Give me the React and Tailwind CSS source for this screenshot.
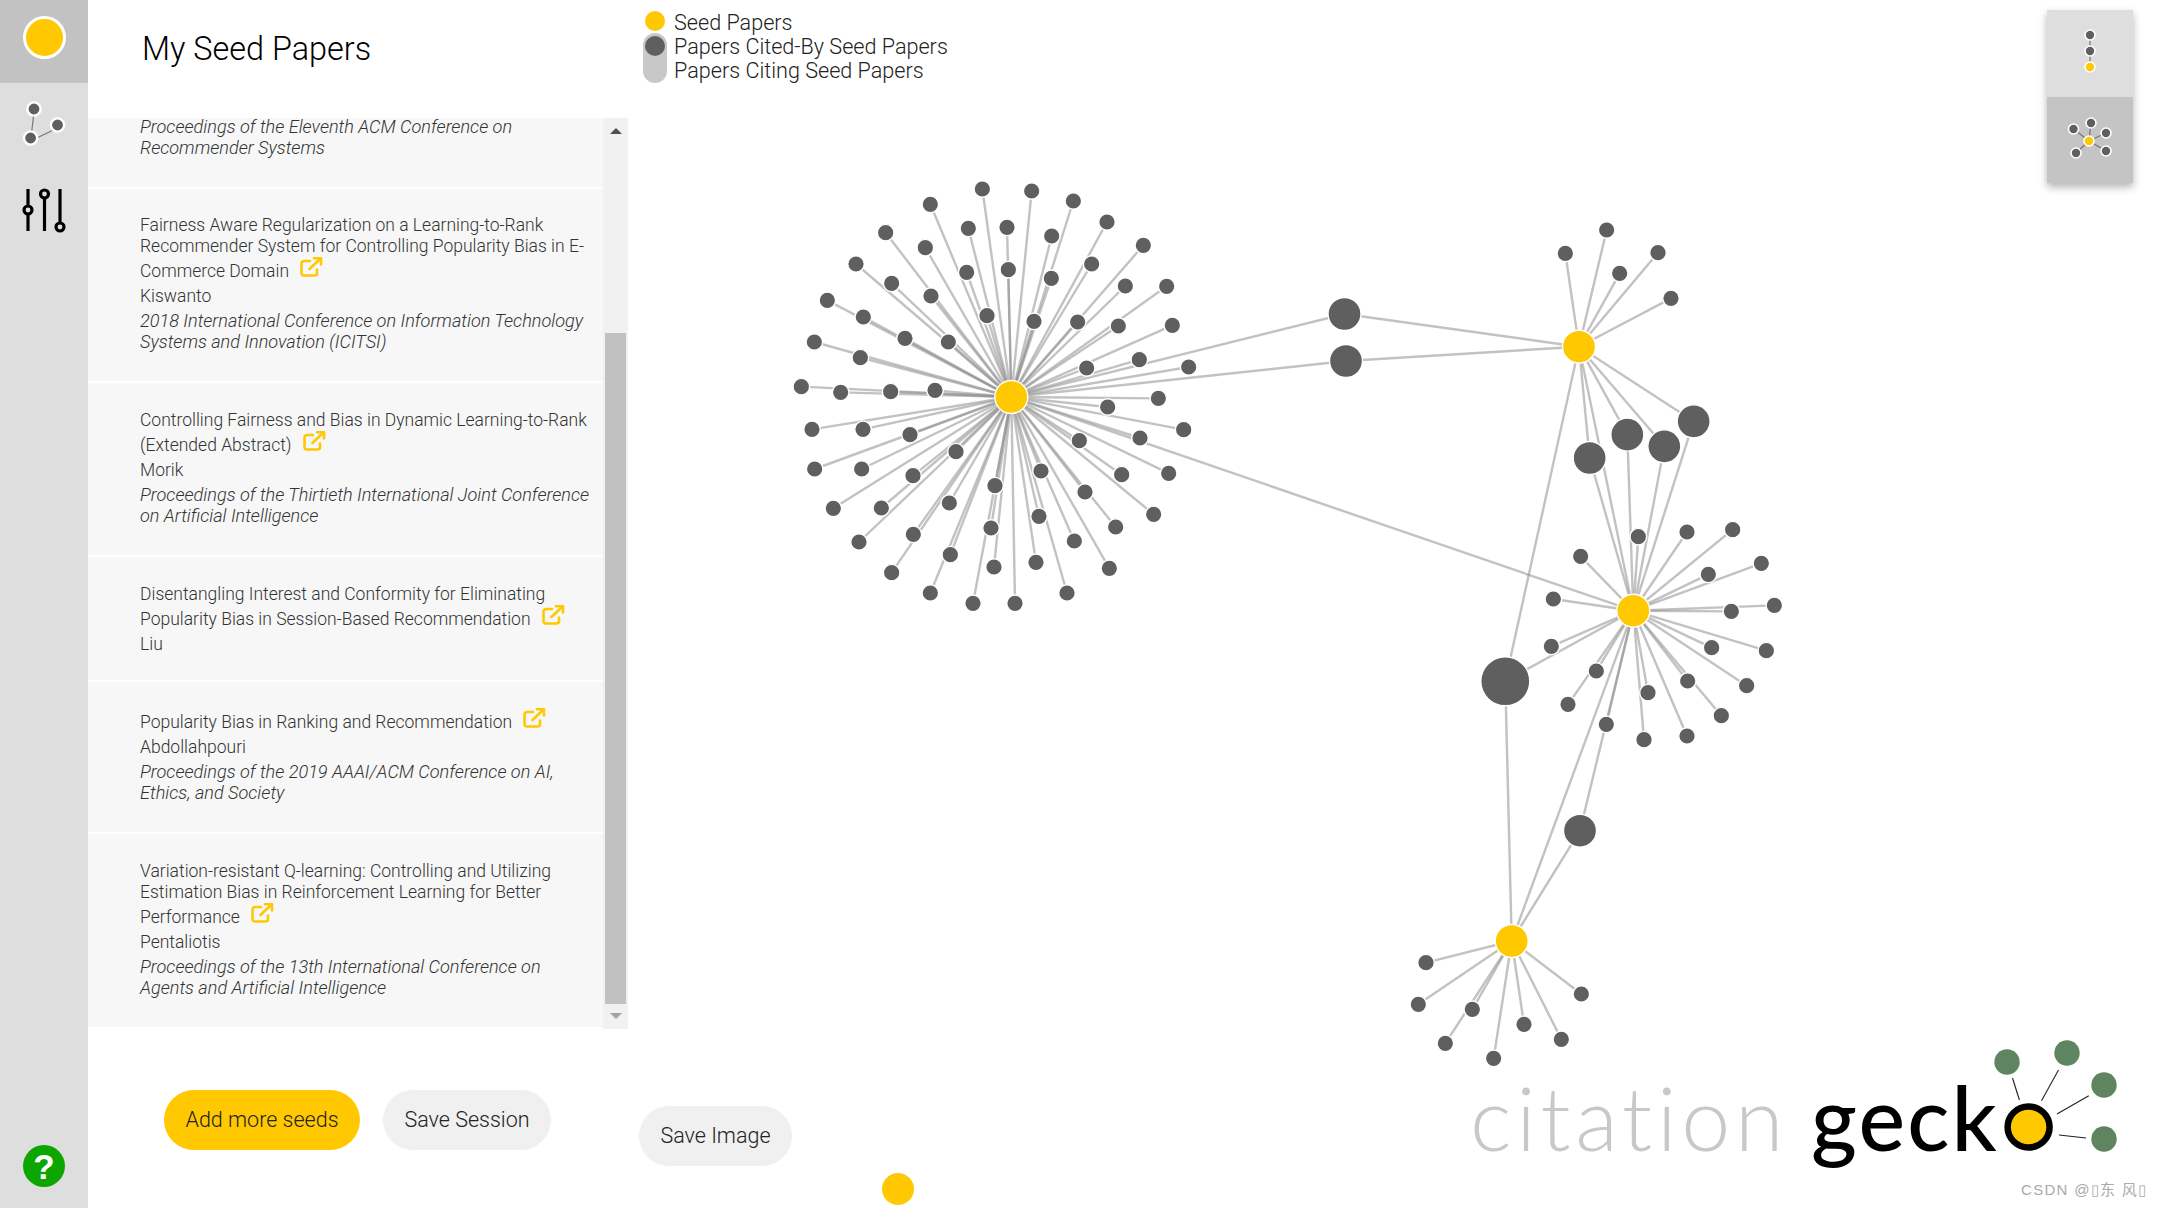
import React from "react";

const Z1 = [[607,87],[755,93],[880,123],[981,186],[1090,256],[1160,379],[1177,496],[1226,621],[1135,715],[1211,809],[1166,940],[1121,1063],[1007,1101],[988,1225],[861,1299],[705,1330],[579,1330],[451,1299],[335,1238],[237,1146],[160,1045],[104,927],[96,808],[64,680],[103,546],[142,421],[228,312],[317,218],[451,133],[565,205],[681,202],[815,228],[935,312],[1036,378],[1015,498],[1078,599],[920,624],[983,741],[1080,834],[1025,944],[915,996],[898,842],[883,1143],[783,933],[777,1069],[768,1207],[645,977],[633,1104],[642,1221],[511,1184],[508,1029],[400,1123],[528,875],[399,947],[304,1044],[245,927],[249,808],[390,824],[465,691],[332,695],[182,697],[241,593],[375,535],[250,471],[335,370],[505,546],[453,408],[436,263],[560,337],[621,467],[685,329],[762,484],[814,355],[893,486]];
const Z2 = [[560,90],[436,160],[714,158],[599,220],[753,295]];
const Z3 = [[565,110],[711,96],[848,89],[392,169],[775,223],[934,190],[973,316],[844,334],[310,297],[304,439],[785,443],[949,452],[890,557],[713,543],[814,647],[439,513],[354,613],[594,578],[711,708],[582,719],[469,673]];
const Z4 = [[108,488],[85,613],[247,628],[166,730],[311,775],[402,673],[514,718],[574,582]];

const map = (pts, ox, oy) => pts.map(([x, y]) => [ox + x / 3, oy + y / 3]);
const C1 = [1011.3, 397];
const C2 = [1579, 346.7];
const C3 = [1633.3, 610.7];
const C4 = [1511.7, 941];
const N1 = map(Z1, 780, 160);
const N2 = map(Z2, 1420, 200);
const N3 = map(Z3, 1450, 500);
const N4 = map(Z4, 1390, 800);
const B1 = [1344.5, 314];
const B2 = [1346, 361];
const L = map([[821,664],[622,704],[733,739],[509,774]], 1420, 200);
const BIG = [1505.3, 681.3];
const MID = [1580, 830.7];

const edges = [
  ...N1.map((p) => [C1, p]),
  ...N2.map((p) => [C2, p]),
  ...N3.map((p) => [C3, p]),
  ...N4.map((p) => [C4, p]),
  [C1, B1], [C1, B2], [B1, C2], [B2, C2], [C1, C3],
  ...L.flatMap((p) => [[C2, p], [p, C3]]),
  [C2, C3], [C2, BIG], [BIG, C3], [BIG, C4], [C3, C4], [C3, MID], [MID, C4],
];

function Graph() {
  const dark = "#5f5f5f";
  return (
    <svg className="absolute inset-0 w-full h-full" viewBox="628 0 1532 1208">
      <g stroke="#8f8f8f" strokeOpacity="0.55" strokeWidth="2.4">
        {edges.map(([a, b], i) => (
          <line key={i} x1={a[0]} y1={a[1]} x2={b[0]} y2={b[1]} />
        ))}
      </g>
      <g fill={dark} stroke="#fff" strokeWidth="1.4">
        {[...N1, ...N2, ...N3, ...N4].map(([x, y], i) => (
          <circle key={i} cx={x} cy={y} r="8.3" />
        ))}
        {[B1, B2, ...L, MID].map(([x, y], i) => (
          <circle key={i} cx={x} cy={y} r="16.5" />
        ))}
        <circle cx={BIG[0]} cy={BIG[1]} r="24.5" />
      </g>
      <g fill="#ffc800" stroke="#fff" strokeWidth="1.4">
        {[C1, C2, C3, C4].map(([x, y], i) => (
          <circle key={i} cx={x} cy={y} r="16.5" />
        ))}
      </g>
    </svg>
  );
}

function ExtIcon() {
  return (
    <svg className="inline-block align-[0px] ml-[11px]" width="23" height="20" viewBox="0 0 23 20" fill="none" stroke="#ffc800" strokeWidth="2.6" strokeLinecap="round" strokeLinejoin="round">
      <path d="M10 4H4a2.5 2.5 0 0 0-2.5 2.5v9.8A2.2 2.2 0 0 0 3.7 18.5h10.8a2.5 2.5 0 0 0 2.5-2.5v-3.5" />
      <path d="M9.5 12 20.5 1.5" />
      <path d="M14 1.3h7v6.2" />
    </svg>
  );
}

function Item({ title, author, venue, className = "", first = false }) {
  return (
    <div className={"flow-root bg-[#f7f7f7] pl-[52px] " + className}>
      {title && (
        <div className="text-[#333] leading-[21px]">
          {title.map((t, i) => (
            <div key={i}>
              {t}
              {i === title.length - 1 && <ExtIcon />}
            </div>
          ))}
        </div>
      )}
      {author && <div className="text-[#333] leading-[21px] mt-[4px]">{author}</div>}
      {venue && (
        <div className={"italic text-[18.1px] text-[#333] leading-[21px] " + (first ? "-mt-[2px]" : "mt-[3px]")}>
          {venue.map((t, i) => (
            <div key={i}>{t}</div>
          ))}
        </div>
      )}
    </div>
  );
}

function Sidebar() {
  return (
    <aside className="w-[88px] h-full bg-[#dedede] flex flex-col items-center shrink-0 relative">
      <div className="w-full h-[83px] bg-[#c2c2c2] flex items-center justify-center pb-[9px]">
        <div className="w-[43px] h-[43px] rounded-full bg-[#ffc800] border-[3px] border-white" />
      </div>
      <svg className="mt-[14px]" width="48" height="52" viewBox="0 0 48 52">
        <g stroke="#777" strokeWidth="1.2">
          <line x1="14" y1="15" x2="10.6" y2="44" />
          <line x1="37.5" y1="31" x2="10.6" y2="44" />
        </g>
        <g fill="#5f5f5f" stroke="#fff" strokeWidth="2.4">
          <circle cx="14" cy="12" r="6.6" />
          <circle cx="37.5" cy="28" r="6.6" />
          <circle cx="10.6" cy="41" r="6.6" />
        </g>
      </svg>
      <svg className="mt-[38px]" width="48" height="46" viewBox="0 0 48 46" fill="none" stroke="#000" strokeWidth="3.2">
        <line x1="8" y1="2" x2="8" y2="44" />
        <line x1="24.5" y1="11" x2="24.5" y2="44" />
        <line x1="40" y1="2" x2="40" y2="36" />
        <circle cx="8" cy="23" r="4" fill="#dedede" />
        <circle cx="24.5" cy="7" r="4" fill="#dedede" />
        <circle cx="40" cy="40" r="4" fill="#dedede" />
      </svg>
      <div className="absolute left-[23px] top-[1145px] w-[42px] h-[42px] rounded-full bg-[#0da500] flex items-center justify-center text-white font-black text-[35px] leading-none font-['Liberation_Sans',sans-serif]">
        ?
      </div>
    </aside>
  );
}

function Scrollbar() {
  return (
    <div className="w-[25px] h-full bg-[#f1f1f1] flex flex-col items-center shrink-0">
      <div className="h-[215px] w-full flex justify-center pt-[10px]">
        <div className="w-0 h-0 border-l-[6px] border-r-[6px] border-b-[6px] border-l-transparent border-r-transparent border-b-[#505050]" />
      </div>
      <div className="h-[671px] w-[21px] bg-[#c1c1c1]" />
      <div className="pt-[9px]">
        <div className="w-0 h-0 border-l-[6px] border-r-[6px] border-t-[6px] border-l-transparent border-r-transparent border-t-[#a3a3a3]" />
      </div>
    </div>
  );
}

function PaperList() {
  return (
    <div className="flex-1 min-w-0 h-[909px] text-[17.5px]">
      <Item
        first
        className="h-[71px] border-b-2 border-white"
        venue={["Proceedings of the Eleventh ACM Conference on", "Recommender Systems"]}
      />
      <Item
        className="h-[194px] pt-[26px] border-b-2 border-white"
        title={["Fairness Aware Regularization on a Learning-to-Rank", "Recommender System for Controlling Popularity Bias in E-", "Commerce Domain"]}
        author="Kiswanto"
        venue={["2018 International Conference on Information Technology", "Systems and Innovation (ICITSI)"]}
      />
      <Item
        className="h-[174px] pt-[27px] border-b-2 border-white"
        title={["Controlling Fairness and Bias in Dynamic Learning-to-Rank", "(Extended Abstract)"]}
        author="Morik"
        venue={["Proceedings of the Thirtieth International Joint Conference", "on Artificial Intelligence"]}
      />
      <Item
        className="h-[125px] pt-[27px] border-b-2 border-white"
        title={["Disentangling Interest and Conformity for Eliminating", "Popularity Bias in Session-Based Recommendation"]}
        author="Liu"
      />
      <Item
        className="h-[152px] pt-[26px] border-b-2 border-white"
        title={["Popularity Bias in Ranking and Recommendation"]}
        author="Abdollahpouri"
        venue={["Proceedings of the 2019 AAAI/ACM Conference on AI,", "Ethics, and Society"]}
      />
      <Item
        className="h-[193px] pt-[27px]"
        title={["Variation-resistant Q-learning: Controlling and Utilizing", "Estimation Bias in Reinforcement Learning for Better", "Performance"]}
        author="Pentaliotis"
        venue={["Proceedings of the 13th International Conference on", "Agents and Artificial Intelligence"]}
      />
    </div>
  );
}

function ViewControl() {
  const dk = "#5f5f5f";
  return (
    <div className="absolute top-[10px] left-[1419px] w-[86px] shadow-[0_4px_8px_rgba(0,0,0,0.3)]">
      <div className="h-[87px] bg-[#dedede] flex items-center justify-center pb-[5px]">
        <svg width="20" height="52" viewBox="0 0 20 52">
          <line x1="10" y1="10" x2="10" y2="42" stroke="#888" strokeWidth="1.5" />
          <g stroke="#fff" strokeWidth="1.6">
            <circle cx="10" cy="10" r="5" fill={dk} />
            <circle cx="10" cy="26" r="5" fill={dk} />
            <circle cx="10" cy="42" r="5" fill="#ffc800" />
          </g>
        </svg>
      </div>
      <div className="h-[86px] bg-[#c4c4c4] flex items-center justify-center">
        <svg width="60" height="60" viewBox="0 0 60 60">
          <g stroke="#777" strokeWidth="1.3">
            <line x1="29" y1="31" x2="31" y2="13" />
            <line x1="29" y1="31" x2="13.5" y2="19" />
            <line x1="29" y1="31" x2="46" y2="23" />
            <line x1="29" y1="31" x2="16" y2="43" />
            <line x1="29" y1="31" x2="46" y2="41" />
          </g>
          <g fill={dk} stroke="#fff" strokeWidth="1.6">
            <circle cx="31" cy="13" r="5" />
            <circle cx="13.5" cy="19" r="5" />
            <circle cx="46" cy="23" r="5" />
            <circle cx="16" cy="43" r="5" />
            <circle cx="46" cy="41" r="5" />
          </g>
          <circle cx="29" cy="31" r="5" fill="#ffc800" stroke="#fff" strokeWidth="1.6" />
        </svg>
      </div>
    </div>
  );
}

function Logo() {
  return (
    <div className="absolute left-[832px] top-[1040px] w-[700px] h-[150px] pointer-events-none">
      <span className="absolute left-[10px] top-[27px] text-[88px] leading-[100px] font-['Lato',sans-serif] font-light text-[#c8c8c8] tracking-[4.7px]">citation</span>
      <span className="absolute left-[351px] top-[27px] text-[88px] leading-[100px] font-['Lato',sans-serif] font-medium text-black tracking-[2.2px]">geck<span className="text-transparent">o</span></span>
      <svg className="absolute inset-0" width="700" height="150" viewBox="1460 1040 700 150">
        <ellipse cx="2028.6" cy="1127" rx="21" ry="20.5" fill="#ffc800" stroke="#000" strokeWidth="6.5" />
        <g stroke="#222" strokeWidth="1.1">
          <line x1="2012.5" y1="1078" x2="2019.4" y2="1100" />
          <line x1="2058.5" y1="1070" x2="2041.5" y2="1100.7" />
          <line x1="2088.8" y1="1095.7" x2="2057" y2="1114" />
          <line x1="2086" y1="1138" x2="2059" y2="1135" />
        </g>
        <g fill="#5e8460">
          <circle cx="2007" cy="1062" r="12.7" />
          <circle cx="2067" cy="1053" r="12.7" />
          <circle cx="2104" cy="1085" r="12.7" />
          <circle cx="2104" cy="1139" r="12.7" />
        </g>
      </svg>
    </div>
  );
}

export default function App() {
  return (
    <div className="w-[2160px] h-[1208px] flex bg-white overflow-hidden font-['Roboto',sans-serif] font-light relative">
      <Sidebar />
      <div className="w-[540px] h-full flex flex-col shrink-0">
        <div className="h-[118px] flex items-start pl-[54px] pt-[25px] shrink-0">
          <h1 className="text-[32.4px] leading-[48px] font-light text-black">My Seed Papers</h1>
        </div>
        <div className="h-[911px] flex items-start shrink-0">
          <PaperList />
          <Scrollbar />
        </div>
        <div className="flex gap-[23px] pl-[76px] pt-[61px]">
          <button className="w-[196px] h-[60px] rounded-full bg-[#ffc800] text-[21.5px] text-[#222] font-light">Add more seeds</button>
          <button className="w-[168px] h-[60px] rounded-full bg-[#f0f0f0] text-[21.5px] text-[#222] font-light">Save Session</button>
        </div>
      </div>
      <div className="flex-1 h-full relative flex flex-col">
        <Graph />
        <div className="relative pl-[15px] pt-[10px] flex gap-[7px] items-start">
          <div className="w-[24px] relative h-[72px] mt-[1px]">
            <div className="absolute left-0 top-[22px] w-[24px] h-[50px] rounded-full bg-[#c8c8c8]" />
            <div className="absolute left-[2px] top-0 w-[20px] h-[20px] rounded-full bg-[#ffc800]" />
            <div className="absolute left-[2px] top-[25px] w-[20px] h-[20px] rounded-full bg-[#5f5f5f]" />
          </div>
          <div className="text-[21.6px] leading-[24px] text-[#222] pt-[1px]">
            <div>Seed Papers</div>
            <div>Papers Cited-By Seed Papers</div>
            <div>Papers Citing Seed Papers</div>
          </div>
        </div>
        <div className="relative mt-auto pl-[11px] pb-[1px]">
          <button className="w-[153px] h-[60px] rounded-full bg-[#f0f0f0] text-[21.5px] text-[#222] font-light">Save Image</button>
          <div className="w-[32px] h-[32px] rounded-full bg-[#ffc800] ml-[243px] mt-[7px] mb-[2px]" />
        </div>
        <ViewControl />
        <Logo />
        <div className="absolute left-[1393px] top-[1180px] text-[15px] leading-[20px] text-[#aaa] font-normal tracking-[1.3px] font-['Liberation_Sans','Noto_Sans_CJK_SC',sans-serif] whitespace-nowrap">
          CSDN @▯东 风▯
        </div>
      </div>
    </div>
  );
}
